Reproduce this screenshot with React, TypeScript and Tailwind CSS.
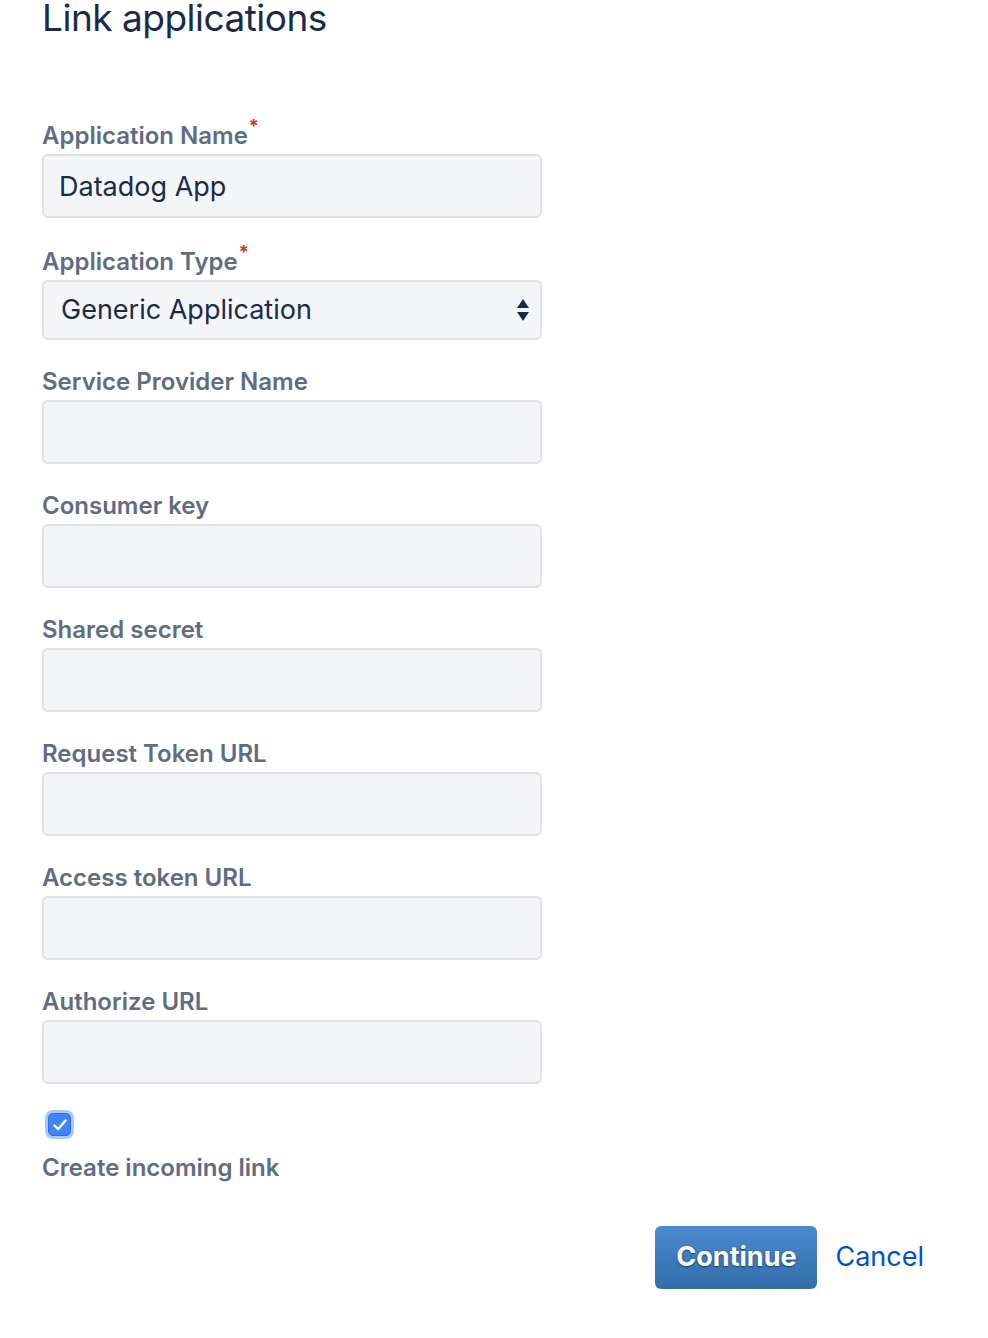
import React from "react";

const fields = [
  { label: "Service Provider Name" },
  { label: "Consumer key" },
  { label: "Shared secret" },
  { label: "Request Token URL" },
  { label: "Access token URL" },
  { label: "Authorize URL" },
];

function Label({ text, required }: { text: string; required?: boolean }) {
  return (
    <div className="h-[37px] flex items-center">
      <span className="text-[24px] font-semibold text-[#5E6C84] leading-none relative">
        {text}
        {required && <span className="absolute -right-[11px] -top-[7px] text-[18px] font-bold text-[#DE350B]">*</span>}
      </span>
    </div>
  );
}

export default function App() {
  return (
    <div className="bg-white min-h-[1338px] pl-[42px] font-['Inter',sans-serif] text-[#172B4D]">
      <h1 className="text-[37px] leading-none font-normal tracking-[-0.5px] pt-[2px] -mt-[3px]">Link applications</h1>

      <div className="w-[500px] mt-[81px]">
        <Label text="Application Name" required />
        <input
          className="w-full h-[64px] rounded-[6px] border-2 border-[#DFE1E6] bg-[#F4F5F7] px-[15px] text-[27px] text-[#172B4D] outline-none"
          defaultValue="Datadog App"
        />

        <div className="mt-[25px]">
          <Label text="Application Type" required />
          <div className="relative h-[60px] rounded-[6px] border-2 border-[#DFE1E6] bg-[#F4F5F7] flex items-center px-[17px]">
            <span className="text-[27px]">Generic Application</span>
            <svg className="absolute right-[10px] top-1/2 -translate-y-1/2" width="14" height="24" viewBox="0 0 14 24">
              <path d="M7 1 L13 10 L1 10 Z" fill="#172B4D" />
              <path d="M1 14 L13 14 L7 23 Z" fill="#172B4D" />
            </svg>
          </div>
        </div>

        {fields.map((f) => (
          <div key={f.label} className="mt-[23px]">
            <Label text={f.label} />
            <input className="w-full h-[64px] rounded-[6px] border-2 border-[#DFE1E6] bg-[#F4F5F7] px-[15px] text-[27px] outline-none" />
          </div>
        ))}

        <div className="mt-[26px] pl-[3px]">
          <div className="w-[29px] h-[29px] rounded-[8px] bg-[#A6C8FA] flex items-center justify-center">
            <div className="w-[23px] h-[23px] rounded-[5px] bg-[#3D86F5] border border-[#2F6FD6] flex items-center justify-center">
              <svg width="16" height="14" viewBox="0 0 16 14">
                <path d="M2.5 7.5 L6.2 11.2 L13.5 2.5" fill="none" stroke="white" strokeWidth="2.4" strokeLinecap="round" strokeLinejoin="round" />
              </svg>
            </div>
          </div>
        </div>
        <div className="mt-[10px] h-[37px] flex items-center">
          <span className="text-[24px] font-semibold text-[#5E6C84]">Create incoming link</span>
        </div>
      </div>

      <div className="w-[882px] mt-[40px] flex items-center justify-end gap-[18px]">
        <button className="h-[63px] w-[162px] rounded-[6px] bg-gradient-to-b from-[#4A8BD1] to-[#336CA9] text-white text-[27px] font-bold [text-shadow:0_1px_2px_rgba(0,0,0,0.5)]">
          Continue
        </button>
        <a className="text-[27px] text-[#0052CC]">Cancel</a>
      </div>
    </div>
  );
}
